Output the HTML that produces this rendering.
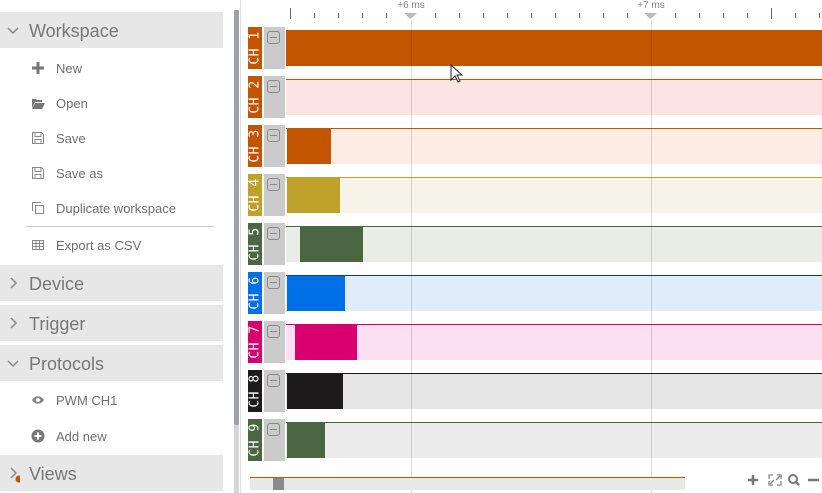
<!DOCTYPE html>
<html><head><meta charset="utf-8"><style>
*{margin:0;padding:0;box-sizing:border-box}
body{width:822px;height:493px;overflow:hidden;background:#fff;font-family:"Liberation Sans",sans-serif;position:relative}
.a{position:absolute}
.hd{position:absolute;left:0;width:223px;height:36px;background:#e7e7e7;color:#777;font-size:18px;line-height:38px;padding-left:29px}
.hd .ch{position:absolute;left:6px;top:0;font-size:14px;color:#777}
.it{position:absolute;left:56px;font-size:13px;color:#6e6e6e}
.ic{position:absolute;left:31px;width:14px;height:14px}
.lab{position:absolute;left:248px;width:14px;height:42px;color:#fff;font-family:"DejaVu Sans Mono",monospace;font-size:13px}
.lab span{position:absolute;left:50%;top:50%;transform:translate(-50%,-50%) rotate(-90deg);white-space:nowrap;letter-spacing:0.5px}
.gb{position:absolute;left:264px;width:21px;height:42px;background:#cbcbcb}
.gb i{position:absolute;left:3px;top:4px;width:13px;height:13px;border:1px solid #888;border-radius:3px}
.gb i:after{content:"";position:absolute;left:2px;top:5px;width:7px;height:1px;background:#888}
.tr{position:absolute;left:286px;width:536px;height:36px}
</style></head><body>
<div class="hd" style="top:12px"><svg class="ch" width="14" height="36" viewBox="0 0 14 36"><path d="M2 16l5 5 5-5" fill="none" stroke="#888" stroke-width="1.5"/></svg>Workspace</div>
<svg class="ic" style="top:61px" viewBox="0 0 14 14"><path d="M7 1v12M1 7h12" stroke="#777" stroke-width="3"/></svg><div class="it" style="top:61px">New</div>
<svg class="ic" style="top:96px" viewBox="0 0 14 14"><path d="M1 3h4l1 1h5v2H4l-3 6z M4 7h10l-3 6H1z" fill="#777"/></svg><div class="it" style="top:96px">Open</div>
<svg class="ic" style="top:131px" viewBox="0 0 14 14"><path d="M1.5 1.5h9l2 2v9h-11z M4 1.5v4h6v-4 M4 12.5v-4h6v4" fill="none" stroke="#888"/></svg><div class="it" style="top:131px">Save</div>
<svg class="ic" style="top:166px" viewBox="0 0 14 14"><path d="M1.5 1.5h9l2 2v9h-11z M4 1.5v4h6v-4 M4 12.5v-4h6v4" fill="none" stroke="#888"/></svg><div class="it" style="top:166px">Save as</div>
<svg class="ic" style="top:201px" viewBox="0 0 14 14"><path d="M1.5 10V1.5H10 M4.5 4.5h8v8h-8z" fill="none" stroke="#888"/></svg><div class="it" style="top:201px">Duplicate workspace</div>
<div class="a" style="left:26px;top:226px;width:188px;height:1px;background:#ccc"></div>
<svg class="ic" style="top:238px" viewBox="0 0 14 14"><path d="M1.5 2.5h11v9h-11z M1.5 5.5h11M1.5 8.5h11M5 2.5v9M8.5 2.5v9" fill="none" stroke="#888"/></svg><div class="it" style="top:238px">Export as CSV</div>
<div class="hd" style="top:265px"><svg class="ch" width="14" height="36"><path d="M5 13l5 5-5 5" fill="none" stroke="#888" stroke-width="1.5"/></svg>Device</div>
<div class="hd" style="top:305px"><svg class="ch" width="14" height="36"><path d="M5 13l5 5-5 5" fill="none" stroke="#888" stroke-width="1.5"/></svg>Trigger</div>
<div class="hd" style="top:345px"><svg class="ch" width="14" height="36"><path d="M2 16l5 5 5-5" fill="none" stroke="#888" stroke-width="1.5"/></svg>Protocols</div>
<svg class="ic" style="top:393px" viewBox="0 0 14 14"><path d="M1 7c3-5 9-5 12 0c-3 5-9 5-12 0z" fill="#888"/><circle cx="7" cy="7" r="2" fill="#fff"/></svg><div class="it" style="top:393px">PWM CH1</div>
<svg class="ic" style="top:429px" viewBox="0 0 14 14"><circle cx="7" cy="7" r="6.5" fill="#777"/><path d="M7 3.5v7M3.5 7h7" stroke="#fff" stroke-width="2"/></svg><div class="it" style="top:429px">Add new</div>
<div class="hd" style="top:455px"><svg class="ch" width="14" height="36"><path d="M5 13l5 5-5 5" fill="none" stroke="#888" stroke-width="1.5"/><circle cx="13" cy="24" r="3.5" fill="#c45500"/></svg>Views</div>
<div class="a" style="left:234px;top:10px;width:5px;height:483px;background:#d6d6d6"></div>
<div class="a" style="left:234px;top:10px;width:5px;height:415px;background:#a0a0a8;border-radius:2px"></div>
<div class="a" style="left:240px;top:0;width:1px;height:493px;background:#ddd"></div>
<svg class="a" style="left:242px;top:0" width="580" height="493">
<g stroke="#666" stroke-width="1">
<path d="M48.5 8v11M529.5 8v11"/>
<path d="M72.5 13v5M96.5 13v5M120.5 13v5M144.5 13v5M193.5 13v5M217.5 13v5M241.5 13v5M265.5 13v5M289.5 13v5M313.5 13v5M337.5 13v5M361.5 13v5M385.5 13v5M433.5 13v5M457.5 13v5M481.5 13v5M505.5 13v5M553.5 13v5M577.5 13v5"/>
</g>
<path d="M162 13h13l-6.5 6z M402 13h13l-6.5 6z" fill="#bbb"/>
<text x="169" y="8" font-size="10" fill="#888" text-anchor="middle" font-family="Liberation Sans">+6 ms</text>
<text x="409" y="8" font-size="10" fill="#888" text-anchor="middle" font-family="Liberation Sans">+7 ms</text>
</svg>
<div class="lab" style="top:27px;background:#c45500"><span>CH 1</span></div><div class="gb" style="top:27px"><i></i></div>
<div class="tr" style="top:30px;background:#c45500"></div>
<div class="lab" style="top:76px;background:#c45500"><span>CH 2</span></div><div class="gb" style="top:76px"><i></i></div>
<div class="tr" style="top:79px;background:#fce4e4;border-top:1px solid #c45500"></div>
<div class="lab" style="top:125px;background:#c45500"><span>CH 3</span></div><div class="gb" style="top:125px"><i></i></div>
<div class="tr" style="top:128px;background:#fdece4;border-top:1px solid #c45500"></div><div class="a" style="left:287px;top:129px;width:44px;height:35px;background:#c45500"></div>
<div class="lab" style="top:174px;background:#bfa22b"><span>CH 4</span></div><div class="gb" style="top:174px"><i></i></div>
<div class="tr" style="top:177px;background:#f6f4e8;border-top:1px solid #bfa22b"></div><div class="a" style="left:287px;top:178px;width:53px;height:35px;background:#bfa22b"></div>
<div class="lab" style="top:223px;background:#4a6741"><span>CH 5</span></div><div class="gb" style="top:223px"><i></i></div>
<div class="tr" style="top:226px;background:#e9ede6;border-top:1px solid #4a6741"></div><div class="a" style="left:300px;top:227px;width:63px;height:35px;background:#4a6741"></div>
<div class="lab" style="top:272px;background:#0070e8"><span>CH 6</span></div><div class="gb" style="top:272px"><i></i></div>
<div class="tr" style="top:275px;background:#e1ecfa;border-top:1px solid #0a3a80"></div><div class="a" style="left:287px;top:276px;width:58px;height:35px;background:#0070e8"></div>
<div class="lab" style="top:321px;background:#d8006f"><span>CH 7</span></div><div class="gb" style="top:321px"><i></i></div>
<div class="tr" style="top:324px;background:#fae0f0;border-top:1px solid #d8006f"></div><div class="a" style="left:295px;top:325px;width:62px;height:35px;background:#d8006f"></div>
<div class="lab" style="top:370px;background:#1c1a1a"><span>CH 8</span></div><div class="gb" style="top:370px"><i></i></div>
<div class="tr" style="top:373px;background:#e6e6e6;border-top:1px solid #1c1a1a"></div><div class="a" style="left:287px;top:374px;width:56px;height:35px;background:#1c1a1a"></div>
<div class="lab" style="top:419px;background:#4a6741"><span>CH 9</span></div><div class="gb" style="top:419px"><i></i></div>
<div class="tr" style="top:422px;background:#ececec;border-top:1px solid #4a6741"></div><div class="a" style="left:287px;top:423px;width:38px;height:35px;background:#4a6741"></div>
<div class="a" style="left:411px;top:20px;width:1px;height:473px;background:rgba(0,0,0,0.13)"></div>
<div class="a" style="left:651px;top:20px;width:1px;height:473px;background:rgba(0,0,0,0.13)"></div>
<svg class="a" style="left:450px;top:64px" width="14" height="20"><path d="M1 1v15l4-4 3 6 2-1-3-6h5z" fill="#fff" stroke="#222"/></svg>
<div class="a" style="left:250px;top:477px;width:435px;height:13px;background:#e8e8e8;border-top:1px solid #c45500"></div>
<div class="a" style="left:273px;top:478px;width:11px;height:12px;background:#8a8a8e"></div>
<svg class="a" style="left:745px;top:472px" width="77" height="16">
<path d="M3 8h10M8 3v10" stroke="#777" stroke-width="2.5"/>
<path d="M24 7V3h4M32 3h4v4M36 9v4h-4M28 13h-4V9M25 12l4-4M35 4l-4 4" fill="none" stroke="#888" stroke-width="1.3"/>
<circle cx="48" cy="7" r="4" fill="none" stroke="#777" stroke-width="2"/><path d="M51 10l3 3" stroke="#777" stroke-width="2.5"/>
<path d="M63 8h11" stroke="#777" stroke-width="2.5"/>
</svg>
</body></html>
